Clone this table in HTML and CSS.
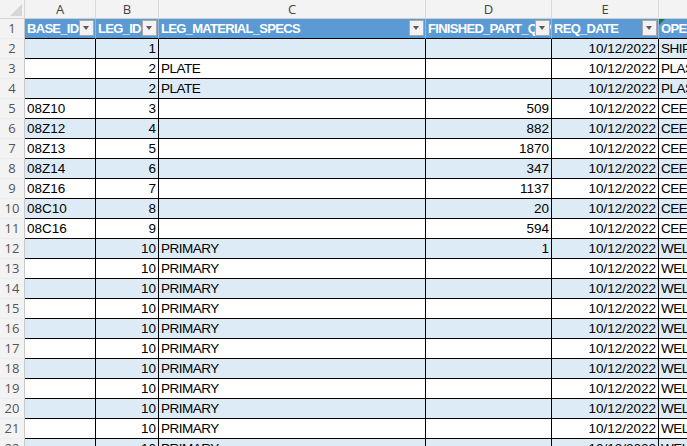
FILE: index.html
```html
<!DOCTYPE html>
<html>
<head>
<meta charset="utf-8">
<link rel="stylesheet" href="styles.css">
</head>
<body>
<div class="sheet">
  <div class="row colhead">
    <div class="corner"><svg width="24" height="18" viewBox="0 0 24 18"><polygon points="22,4 22,16 10,16" fill="#d6d6d6"/></svg></div>
    <div class="ch a">A</div><div class="ch b">B</div><div class="ch c">C</div><div class="ch d">D</div><div class="ch e">E</div><div class="ch f">F</div>
  </div>
  <div class="row thead">
    <div class="rh">1</div>
    <div class="cell a th">BASE_ID<span class="dd"></span></div>
    <div class="cell b th">LEG_ID<span class="dd"></span></div>
    <div class="cell c th">LEG_MATERIAL_SPECS<span class="dd"></span></div>
    <div class="cell d th">FINISHED_PART_QTY<span class="dd"></span></div>
    <div class="cell e th">REQ_DATE<span class="dd"></span></div>
    <div class="cell f th"><span class="flag"></span>OPERATION<span class="dd"></span></div>
  </div>
  <div class="row band"><div class="rh">2</div><div class="cell a"></div><div class="cell b n">1</div><div class="cell c t"></div><div class="cell d n"></div><div class="cell e n">10/12/2022</div><div class="cell f t">SHIPPING</div></div>
  <div class="row"><div class="rh">3</div><div class="cell a"></div><div class="cell b n">2</div><div class="cell c t">PLATE</div><div class="cell d n"></div><div class="cell e n">10/12/2022</div><div class="cell f t">PLASMA</div></div>
  <div class="row band"><div class="rh">4</div><div class="cell a"></div><div class="cell b n">2</div><div class="cell c t">PLATE</div><div class="cell d n"></div><div class="cell e n">10/12/2022</div><div class="cell f t">PLASMA</div></div>
  <div class="row"><div class="rh">5</div><div class="cell a">08Z10</div><div class="cell b n">3</div><div class="cell c t"></div><div class="cell d n">509</div><div class="cell e n">10/12/2022</div><div class="cell f t">CEE/BEND</div></div>
  <div class="row band"><div class="rh">6</div><div class="cell a">08Z12</div><div class="cell b n">4</div><div class="cell c t"></div><div class="cell d n">882</div><div class="cell e n">10/12/2022</div><div class="cell f t">CEE/BEND</div></div>
  <div class="row"><div class="rh">7</div><div class="cell a">08Z13</div><div class="cell b n">5</div><div class="cell c t"></div><div class="cell d n">1870</div><div class="cell e n">10/12/2022</div><div class="cell f t">CEE/BEND</div></div>
  <div class="row band"><div class="rh">8</div><div class="cell a">08Z14</div><div class="cell b n">6</div><div class="cell c t"></div><div class="cell d n">347</div><div class="cell e n">10/12/2022</div><div class="cell f t">CEE/BEND</div></div>
  <div class="row"><div class="rh">9</div><div class="cell a">08Z16</div><div class="cell b n">7</div><div class="cell c t"></div><div class="cell d n">1137</div><div class="cell e n">10/12/2022</div><div class="cell f t">CEE/BEND</div></div>
  <div class="row band"><div class="rh">10</div><div class="cell a">08C10</div><div class="cell b n">8</div><div class="cell c t"></div><div class="cell d n">20</div><div class="cell e n">10/12/2022</div><div class="cell f t">CEE/BEND</div></div>
  <div class="row"><div class="rh">11</div><div class="cell a">08C16</div><div class="cell b n">9</div><div class="cell c t"></div><div class="cell d n">594</div><div class="cell e n">10/12/2022</div><div class="cell f t">CEE/BEND</div></div>
  <div class="row band"><div class="rh">12</div><div class="cell a"></div><div class="cell b n">10</div><div class="cell c t">PRIMARY</div><div class="cell d n">1</div><div class="cell e n">10/12/2022</div><div class="cell f t">WELD</div></div>
  <div class="row"><div class="rh">13</div><div class="cell a"></div><div class="cell b n">10</div><div class="cell c t">PRIMARY</div><div class="cell d n"></div><div class="cell e n">10/12/2022</div><div class="cell f t">WELD</div></div>
  <div class="row band"><div class="rh">14</div><div class="cell a"></div><div class="cell b n">10</div><div class="cell c t">PRIMARY</div><div class="cell d n"></div><div class="cell e n">10/12/2022</div><div class="cell f t">WELD</div></div>
  <div class="row"><div class="rh">15</div><div class="cell a"></div><div class="cell b n">10</div><div class="cell c t">PRIMARY</div><div class="cell d n"></div><div class="cell e n">10/12/2022</div><div class="cell f t">WELD</div></div>
  <div class="row band"><div class="rh">16</div><div class="cell a"></div><div class="cell b n">10</div><div class="cell c t">PRIMARY</div><div class="cell d n"></div><div class="cell e n">10/12/2022</div><div class="cell f t">WELD</div></div>
  <div class="row"><div class="rh">17</div><div class="cell a"></div><div class="cell b n">10</div><div class="cell c t">PRIMARY</div><div class="cell d n"></div><div class="cell e n">10/12/2022</div><div class="cell f t">WELD</div></div>
  <div class="row band"><div class="rh">18</div><div class="cell a"></div><div class="cell b n">10</div><div class="cell c t">PRIMARY</div><div class="cell d n"></div><div class="cell e n">10/12/2022</div><div class="cell f t">WELD</div></div>
  <div class="row"><div class="rh">19</div><div class="cell a"></div><div class="cell b n">10</div><div class="cell c t">PRIMARY</div><div class="cell d n"></div><div class="cell e n">10/12/2022</div><div class="cell f t">WELD</div></div>
  <div class="row band"><div class="rh">20</div><div class="cell a"></div><div class="cell b n">10</div><div class="cell c t">PRIMARY</div><div class="cell d n"></div><div class="cell e n">10/12/2022</div><div class="cell f t">WELD</div></div>
  <div class="row"><div class="rh">21</div><div class="cell a"></div><div class="cell b n">10</div><div class="cell c t">PRIMARY</div><div class="cell d n"></div><div class="cell e n">10/12/2022</div><div class="cell f t">WELD</div></div>
  <div class="row band"><div class="rh">22</div><div class="cell a"></div><div class="cell b n">10</div><div class="cell c t">PRIMARY</div><div class="cell d n"></div><div class="cell e n">10/12/2022</div><div class="cell f t">WELD</div></div>
</div>
</body>
</html>
```
FILE: styles.css
```css
html, body {
  margin: 0;
  padding: 0;
  background: #ffffff;
  overflow: hidden;
}
body {
  font-family: "Liberation Sans", Arial, sans-serif;
  font-size: 13.5px;
  color: #000000;
}
.sheet {
  display: flex;
  flex-direction: column;
  width: 687px;
  height: 446px;
  overflow: hidden;
}
.row {
  display: flex;
  height: 20px;
  flex: none;
  background: #ffffff;
}
.row.band {
  background: #ddebf7;
}
.colhead {
  height: 19px;
  background: #f3f3f3;
}
.corner {
  width: 25px;
  flex: none;
  box-sizing: border-box;
  border-right: 1px solid #d4d4d4;
  border-bottom: 1px solid #d4d4d4;
  display: flex;
}
.ch {
  flex: none;
  box-sizing: border-box;
  border-right: 1px solid #dadada;
  border-bottom: 1px solid #cfcfcf;
  color: #444444;
  font-family: "Open Sans", "Noto Sans", sans-serif;
  font-size: 13px;
  text-align: center;
  line-height: 18px;
}
.rh {
  width: 25px;
  flex: none;
  box-sizing: border-box;
  background: #f3f3f3;
  border-right: 1px solid #c8c8c8;
  border-bottom: 1px solid #ececec;
  color: #555555;
  font-family: "Open Sans", "Noto Sans", sans-serif;
  font-size: 13px;
  text-align: center;
  display: flex;
  align-items: flex-end;
  justify-content: center;
  line-height: 17px;
  padding-bottom: 1px;
}
.a { width: 71px; }
.b { width: 63px; }
.c { width: 267px; }
.d { width: 126px; }
.e { width: 107px; }
.f { width: 130px; }
.cell {
  flex: none;
  box-sizing: border-box;
  border-right: 1px solid #000000;
  border-bottom: 1px solid #000000;
  padding: 0 2px 1px 2px;
  white-space: nowrap;
  overflow: hidden;
  display: flex;
  align-items: flex-end;
  line-height: 16px;
}
.cell.n {
  justify-content: flex-end;
}
.cell.t {
  letter-spacing: -0.5px;
}
.th {
  position: relative;
  background: #5b9bd5;
  color: #ffffff;
  font-size: 13px;
  font-weight: bold;
  letter-spacing: -0.7px;
  border-right-color: #8fb8e0;
  border-bottom-color: #000000;
  padding-left: 2px;
}
.dd {
  position: absolute;
  right: 1px;
  top: 1px;
  width: 15px;
  height: 16px;
  box-sizing: border-box;
  background: #f2f2f2;
  border: 1px solid #a9a9a9;
}
.dd::after {
  content: "";
  position: absolute;
  left: 3px;
  top: 5px;
  border-left: 3.5px solid transparent;
  border-right: 3.5px solid transparent;
  border-top: 4px solid #5a5a5a;
}
.flag {
  position: absolute;
  left: 0;
  top: 0;
  width: 0;
  height: 0;
  border-top: 6px solid #217346;
  border-right: 6px solid transparent;
}
```
